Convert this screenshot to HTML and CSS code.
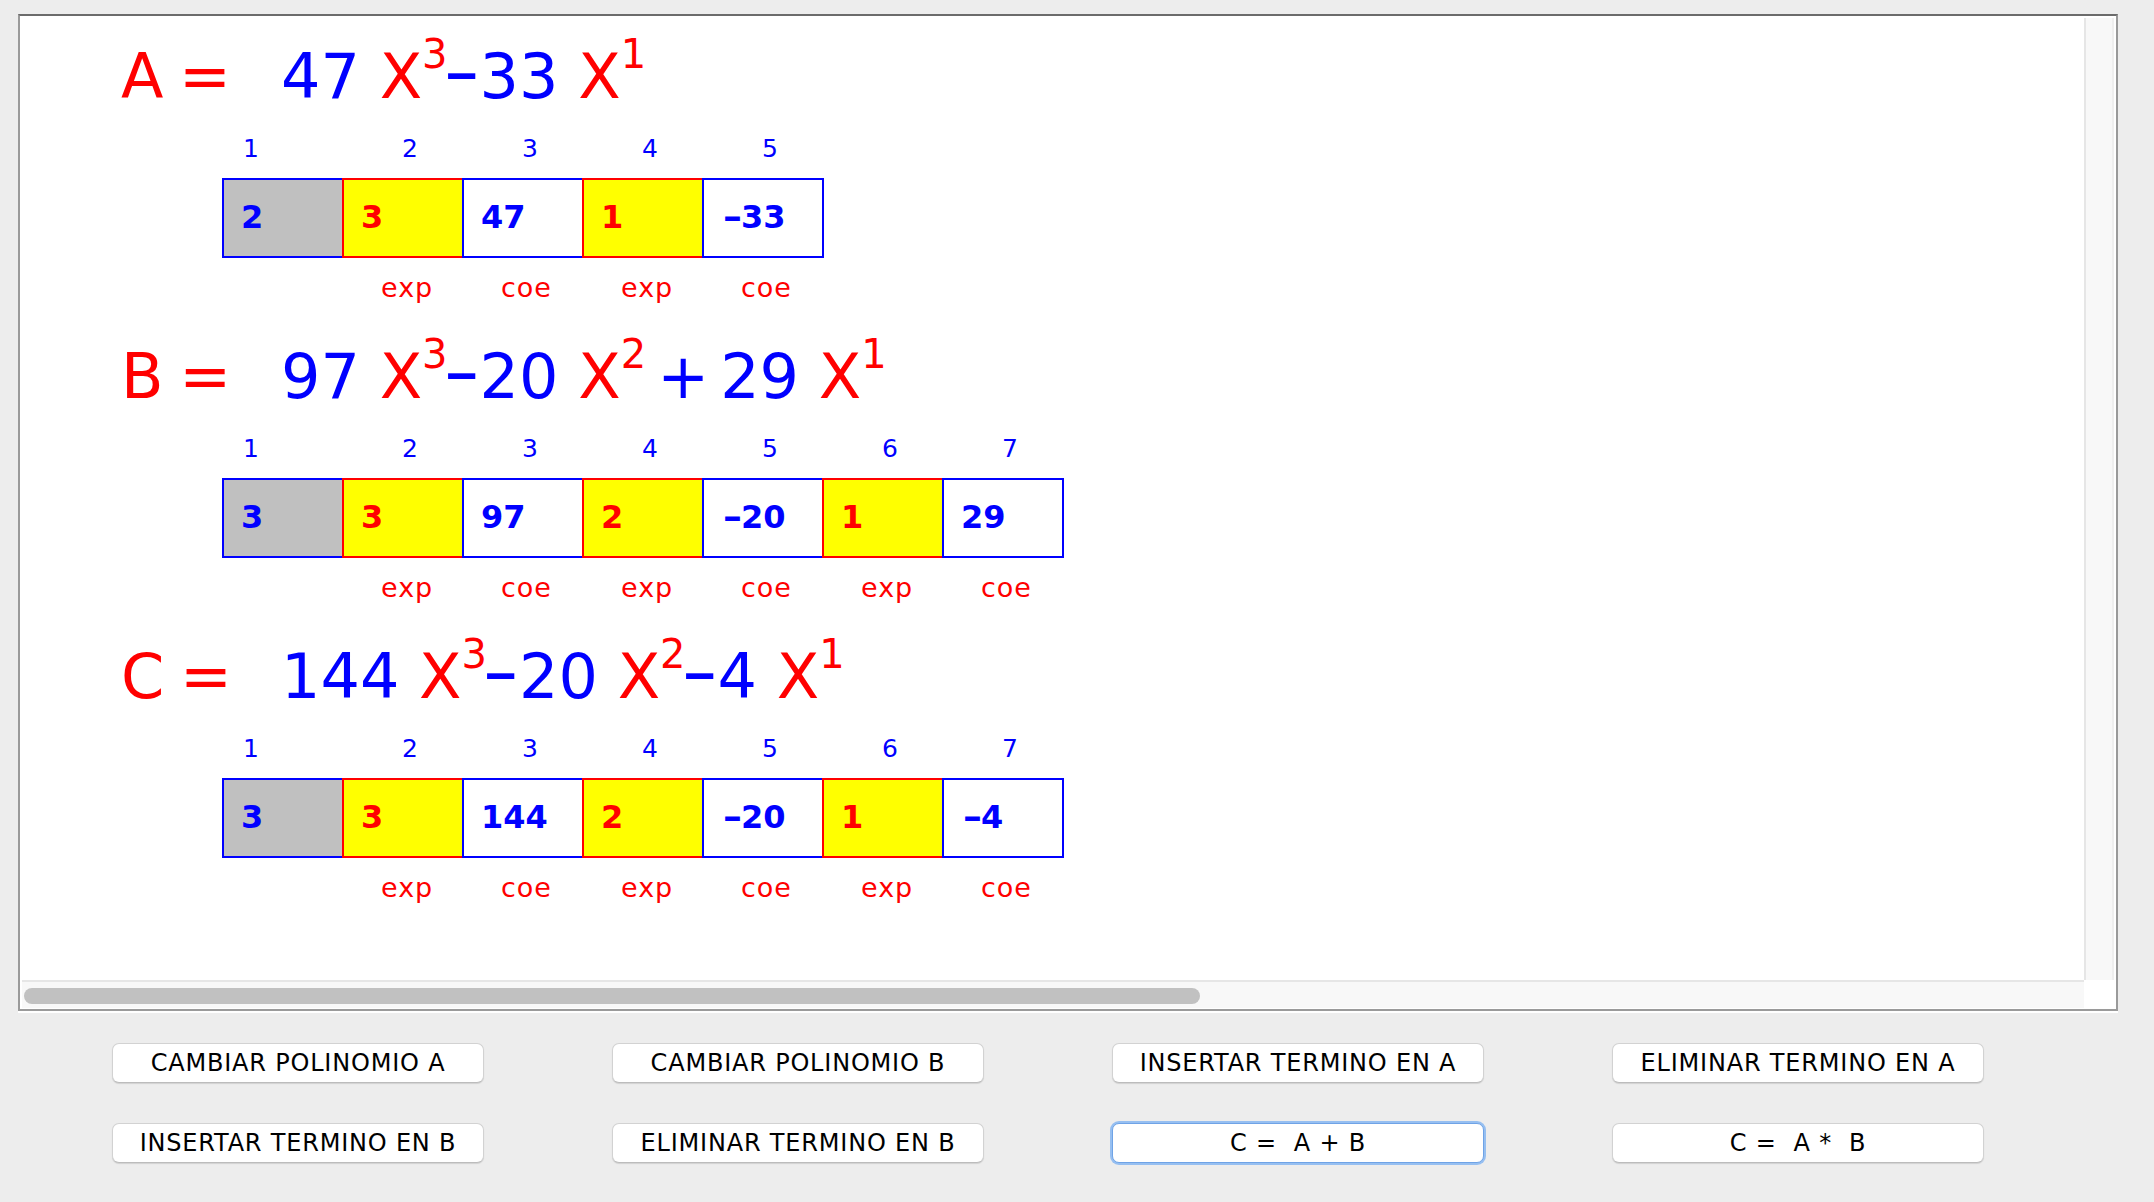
FILE: index.html
```html
<!DOCTYPE html>
<html>
<head>
<meta charset="utf-8">
<title>Polinomios</title>
<link rel="stylesheet" href="styles.css">
</head>
<body>
<div class="frame">
  <div class="view">
    <div class="sec">
      <div class="title"><span class="name">A =</span><span class="c">47</span> <span class="x">X</span><span class="e">3</span><span class="m">-</span><span class="c">33</span> <span class="x">X</span><span class="e">1</span></div>
      <div class="idx"><span>1</span><span>2</span><span>3</span><span>4</span><span>5</span></div>
      <div class="cells"><div class="cell">2</div><div class="cell ex">3</div><div class="cell">47</div><div class="cell ex">1</div><div class="cell"><span class="mc">-</span>33</div></div>
      <div class="lab"><span></span><span>exp</span><span>coe</span><span>exp</span><span>coe</span></div>
    </div>
    <div class="sec">
      <div class="title"><span class="name">B =</span><span class="c">97</span> <span class="x">X</span><span class="e">3</span><span class="m">-</span><span class="c">20</span> <span class="x">X</span><span class="e">2</span><span class="p">+</span><span class="c">29</span> <span class="x">X</span><span class="e">1</span></div>
      <div class="idx"><span>1</span><span>2</span><span>3</span><span>4</span><span>5</span><span>6</span><span>7</span></div>
      <div class="cells"><div class="cell">3</div><div class="cell ex">3</div><div class="cell">97</div><div class="cell ex">2</div><div class="cell"><span class="mc">-</span>20</div><div class="cell ex">1</div><div class="cell">29</div></div>
      <div class="lab"><span></span><span>exp</span><span>coe</span><span>exp</span><span>coe</span><span>exp</span><span>coe</span></div>
    </div>
    <div class="sec">
      <div class="title"><span class="name">C =</span><span class="c">144</span> <span class="x">X</span><span class="e">3</span><span class="m">-</span><span class="c">20</span> <span class="x">X</span><span class="e">2</span><span class="m">-</span><span class="c">4</span> <span class="x">X</span><span class="e">1</span></div>
      <div class="idx"><span>1</span><span>2</span><span>3</span><span>4</span><span>5</span><span>6</span><span>7</span></div>
      <div class="cells"><div class="cell">3</div><div class="cell ex">3</div><div class="cell">144</div><div class="cell ex">2</div><div class="cell"><span class="mc">-</span>20</div><div class="cell ex">1</div><div class="cell"><span class="mc">-</span>4</div></div>
      <div class="lab"><span></span><span>exp</span><span>coe</span><span>exp</span><span>coe</span><span>exp</span><span>coe</span></div>
    </div>
  </div>
  <div class="vbar"></div>
  <div class="hbar"><div class="thumb"></div></div>
  <div class="corner"></div>
</div>
<div class="btns">
  <button class="btn">CAMBIAR POLINOMIO A</button>
  <button class="btn">CAMBIAR POLINOMIO B</button>
  <button class="btn">INSERTAR TERMINO EN A</button>
  <button class="btn">ELIMINAR TERMINO EN A</button>
  <button class="btn">INSERTAR TERMINO EN B</button>
  <button class="btn">ELIMINAR TERMINO EN B</button>
  <button class="btn focus">C =  A + B</button>
  <button class="btn">C =  A *  B</button>
</div>
</body>
</html>
```
FILE: styles.css
```css
html, body {
  margin: 0;
  padding: 0;
}
body {
  background: #ededed;
  font-family: "DejaVu Sans", sans-serif;
  width: 2154px;
  height: 1202px;
  overflow: hidden;
}
.frame {
  box-sizing: border-box;
  margin: 14px 36px 0 18px;
  height: 997px;
  border: 2px solid #9a9a9a;
  border-top-color: #6b6b6b;
  background: #fff;
  padding: 2px 2px 1px 2px;
  display: grid;
  grid-template-columns: 1fr 30px;
  grid-template-rows: 962px 28px;
  box-shadow: 0 2px 0 #fff;
}
.view {
  overflow: hidden;
  padding-left: 99px;
}
.sec {
  height: 300px;
}
.title {
  padding-top: 9px;
  height: 100px;
  line-height: 100px;
  font-size: 62px;
  white-space: nowrap;
  color: #0000ff;
}
.name {
  display: inline-block;
  width: 160px;
  color: #ff0000;
  letter-spacing: -2px;
}
.c { color: #0000ff; }
.x { color: #ff0000; }
.e {
  font-size: 40px;
  color: #ff0000;
  vertical-align: 30px;
  line-height: 0;
}
.m {
  display: inline-block;
  width: 32px;
  color: #0000ff;
  transform: translateX(-5px) scale(1.67, 1.15);
  transform-origin: 0 82px;
}
.p {
  display: inline-block;
  box-sizing: border-box;
  width: 74px;
  padding-left: 11px;
  color: #0000ff;
}
.idx {
  display: flex;
  margin: 7px 0 0 101px;
  height: 30px;
  line-height: 30px;
  font-size: 25px;
  color: #0000ff;
}
.idx span {
  flex: none;
  box-sizing: border-box;
  width: 120px;
  padding-left: 60px;
}
.idx span:first-child {
  padding-left: 21px;
}
.cells {
  display: flex;
  margin: 14px 0 0 101px;
}
.cell {
  flex: none;
  box-sizing: border-box;
  width: 122px;
  height: 80px;
  margin-left: -2px;
  border: 2px solid #0000ff;
  padding-left: 17px;
  background: #fff;
  color: #0000ff;
  font-weight: bold;
  font-size: 32px;
  line-height: 74px;
  white-space: nowrap;
}
.cell:first-child {
  margin-left: 0;
  background: #c0c0c0;
}
.cell.ex {
  background: #ffff00;
  border-color: #ff0000;
  color: #ff0000;
}
.mc {
  display: inline-block;
  width: 20px;
  transform: translateX(1.5px) scaleX(1.5);
  transform-origin: 0 0;
}
.lab {
  display: flex;
  margin: 15px 0 0 101px;
  height: 30px;
  line-height: 30px;
  font-size: 27px;
  letter-spacing: 1px;
  color: #ff0000;
}
.lab span {
  flex: none;
  box-sizing: border-box;
  width: 120px;
  padding-left: 39px;
}
.vbar {
  background: #f8f8f8;
  border-left: 2px solid #e6e6e6;
  border-right: 2px solid #efefef;
}
.hbar {
  background: #f8f8f8;
  border-top: 2px solid #e6e6e6;
}
.thumb {
  margin: 6px 0 0 2px;
  width: 1176px;
  height: 16px;
  border-radius: 8px;
  background: #c1c1c1;
}
.corner {
  background: #fff;
}
.btns {
  display: grid;
  grid-template-columns: repeat(4, 372px);
  column-gap: 128px;
  row-gap: 40px;
  margin: 32px 0 0 112px;
}
.btn {
  box-sizing: border-box;
  height: 40px;
  margin: 0;
  padding: 0;
  border: 1px solid #d2d2d2;
  border-bottom-color: #bcbcbc;
  border-radius: 7px;
  background: #fff;
  color: #000;
  font-family: "DejaVu Sans", sans-serif;
  font-size: 24px;
  letter-spacing: 0.8px;
  line-height: 38px;
  text-align: center;
  white-space: pre;
  box-shadow: 0 1px 1px rgba(0, 0, 0, 0.12);
}
.btn.focus {
  border-color: #6fa3e6;
  box-shadow: 0 0 0 2px #96bff1;
}
```
